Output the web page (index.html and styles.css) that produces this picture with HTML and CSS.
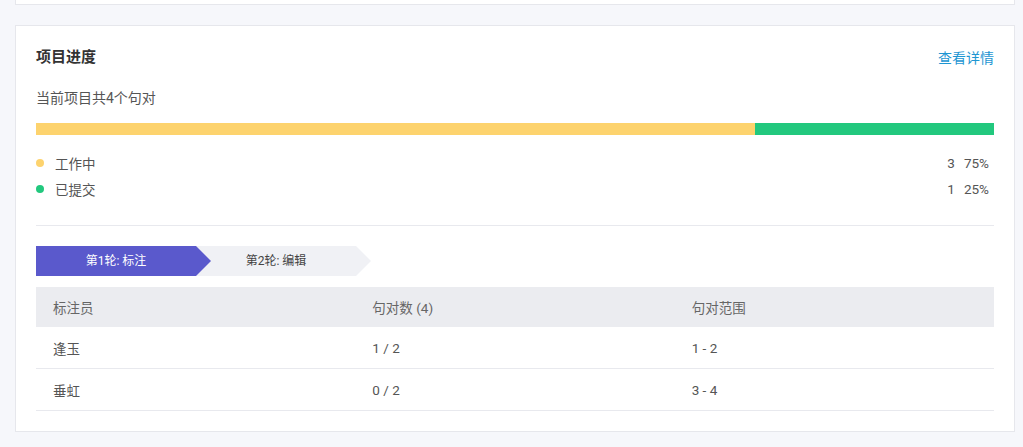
FILE: index.html
```html
<!DOCTYPE html>
<html lang="zh">
<head>
<meta charset="utf-8">
<link rel="stylesheet" href="styles.css">
</head>
<body>
<div class="topcard"></div>
<div class="card">
  <div class="header">
    <div class="title">项目进度</div>
    <a class="link">查看详情</a>
  </div>
  <div class="subtitle">当前项目共4个句对</div>
  <div class="bar">
    <div class="seg seg-work" style="width:75%"></div>
    <div class="seg seg-done" style="width:25%"></div>
  </div>
  <div class="legend">
    <div class="legend-row">
      <span class="dot dot-work"></span><span class="legend-label">工作中</span>
      <span class="legend-count">3</span><span class="legend-pct">75%</span>
    </div>
    <div class="legend-row">
      <span class="dot dot-done"></span><span class="legend-label">已提交</span>
      <span class="legend-count">1</span><span class="legend-pct">25%</span>
    </div>
  </div>
  <div class="divider"></div>
  <div class="tabs">
    <div class="tab tab-active">第1轮: 标注</div>
    <div class="tab tab-idle">第2轮: 编辑</div>
  </div>
  <div class="table">
    <div class="trow thead">
      <div class="cell">标注员</div>
      <div class="cell">句对数 (4)</div>
      <div class="cell">句对范围</div>
    </div>
    <div class="trow">
      <div class="cell">逢玉</div>
      <div class="cell">1 / 2</div>
      <div class="cell">1 - 2</div>
    </div>
    <div class="trow">
      <div class="cell">垂虹</div>
      <div class="cell">0 / 2</div>
      <div class="cell">3 - 4</div>
    </div>
  </div>
</div>
</body>
</html>
```
FILE: styles.css
```css
* { box-sizing: border-box; }
body {
  margin: 0;
  background: #f6f7fb;
  font-family: Roboto, "Noto Sans CJK SC", sans-serif;
  color: #555;
  font-size: 13px;
}
.topcard {
  margin-left: 15px;
  width: 1000px;
  height: 5px;
  background: #fff;
  border: 1px solid #e6e7ec;
  border-top: none;
}
.card {
  margin: 20px 0 0 15px;
  width: 1000px;
  background: #fff;
  border: 1px solid #e6e7ec;
  padding: 21px 20px 20px;
}
.header {
  display: flex;
  justify-content: space-between;
  align-items: center;
  height: 20px;
}
.title {
  font-size: 15px;
  font-weight: bold;
  color: #333;
  line-height: 20px;
}
.link {
  font-size: 14px;
  color: #1d96d2;
  line-height: 20px;
  margin-top: 2px;
}
.subtitle {
  margin-top: 21px;
  line-height: 20px;
  font-size: 14px;
  color: #555;
}
.bar {
  margin-top: 15px;
  height: 12px;
  display: flex;
}
.seg-work { background: #fdd36e; }
.seg-done { background: #22c87e; }
.legend {
  margin-top: 18px;
  display: flex;
  flex-direction: column;
  gap: 6px;
}
.legend-row {
  display: flex;
  align-items: center;
  height: 20px;
  padding: 0 5px 0 0;
  font-size: 13.5px;
  color: #555;
}
.dot {
  width: 8px;
  height: 8px;
  border-radius: 50%;
  margin-right: 11px;
}
.dot-work { background: #fdd36e; }
.dot-done { background: #22c87e; }
.legend-label { flex: 1; }
.legend-count { margin-right: 9px; }
.divider {
  margin-top: 26px;
  height: 1px;
  background: #e8e9ee;
}
.tabs {
  margin-top: 20px;
  display: flex;
  height: 30px;
}
.tab {
  width: 175px;
  height: 30px;
  line-height: 30px;
  font-size: 12px;
  padding-right: 15px;
  text-align: center;
  clip-path: polygon(0 0, 160px 0, 175px 50%, 160px 100%, 0 100%);
}
.tab-active {
  background: #5a59cc;
  color: #fff;
  position: relative;
  z-index: 1;
}
.tab-idle {
  background: #f0f1f5;
  color: #444;
  margin-left: -15px;
}
.table {
  margin-top: 11px;
}
.trow {
  display: grid;
  grid-template-columns: 1fr 1fr 1fr;
  height: 42px;
  align-items: center;
  border-bottom: 1px solid #e8e9ee;
  color: #555;
}
.thead {
  height: 40px;
  background: #ebecf0;
  border-bottom: none;
  color: #666;
}
.cell {
  padding-left: 17px;
  font-size: 13.5px;
}
```
